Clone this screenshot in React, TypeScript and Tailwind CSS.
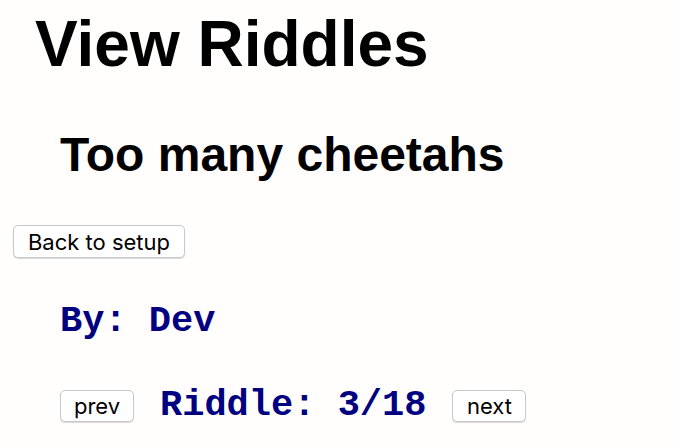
export default function App() {
  return (
    <div className="w-[678px] h-[448px] bg-[#fffefc] overflow-hidden font-['Liberation_Sans',Arial,sans-serif] text-black">
      <h1 className="text-[64px] font-bold leading-none pl-[35px] pt-[12px]">View Riddles</h1>
      <h2 className="text-[48px] font-bold leading-none pl-[60px] pt-[55px]">Too many cheetahs</h2>
      <div className="pl-[13px] pt-[46px]">
        <button className="bg-white border border-[#c8c8c8] rounded-[5px] shadow-[0_1px_1px_rgba(0,0,0,0.15)] leading-none font-[Inter,sans-serif] text-[22px] w-[172px] h-[33px]">
          Back to setup
        </button>
      </div>
      <div className="pl-[60px] pt-[45px] text-[37px] font-bold text-[#000080] leading-none font-['Liberation_Mono',monospace]">
        By: Dev
      </div>
      <div className="pl-[60px] pt-[47px] flex items-center gap-[26px]">
        <button className="bg-white border border-[#c8c8c8] rounded-[5px] shadow-[0_1px_1px_rgba(0,0,0,0.15)] leading-none font-[Inter,sans-serif] text-[22px] w-[74px] h-[32px]">
          prev
        </button>
        <span className="text-[37px] font-bold text-[#000080] leading-none font-['Liberation_Mono',monospace]">
          Riddle: 3/18
        </span>
        <button className="bg-white border border-[#c8c8c8] rounded-[5px] shadow-[0_1px_1px_rgba(0,0,0,0.15)] leading-none font-[Inter,sans-serif] text-[22px] w-[74px] h-[32px]">
          next
        </button>
      </div>
    </div>
  );
}
